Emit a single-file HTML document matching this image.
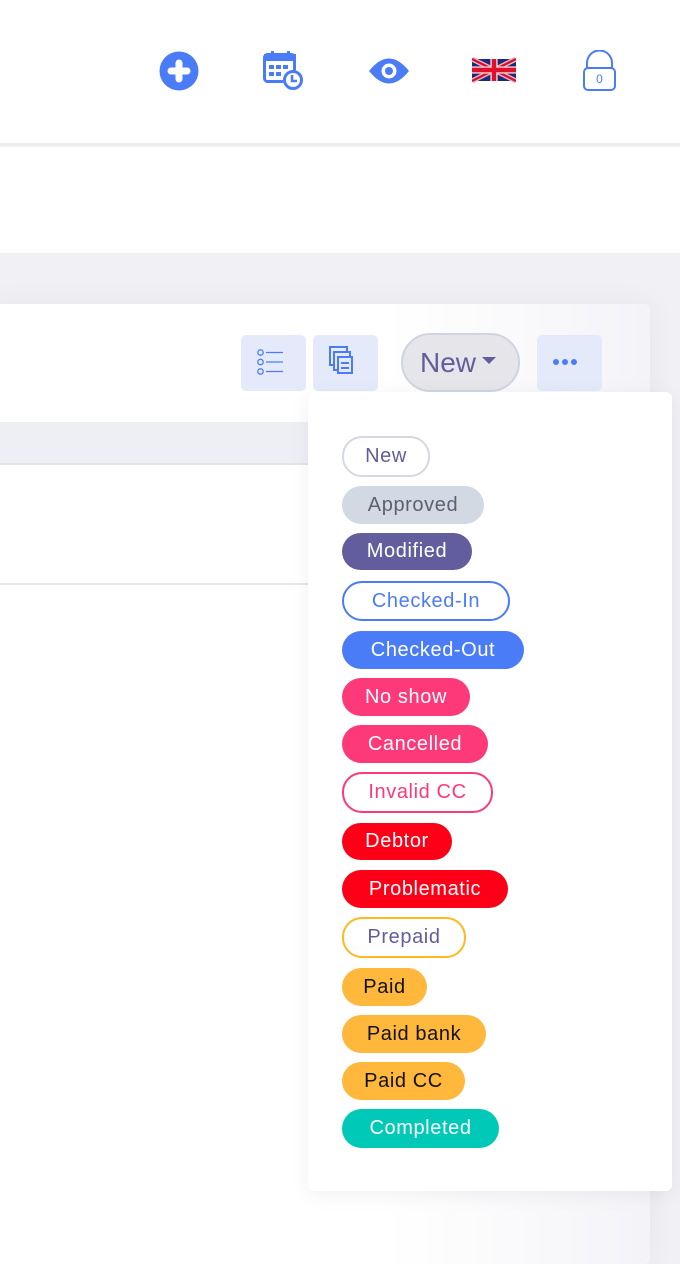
<!DOCTYPE html>
<html><head><meta charset="utf-8"><style>
*{margin:0;padding:0;box-sizing:border-box}
body{width:680px;height:1246px;background:#f0f0f5;position:relative;overflow:hidden;font-family:"Liberation Sans",sans-serif}
.hdr{position:absolute;left:0;top:0;width:680px;height:145px;background:#fff;border-bottom:2px solid #ebebf0}
.sub{position:absolute;left:0;top:147px;width:680px;height:106px;background:#fff}
.card{position:absolute;left:-10px;top:304px;width:660px;height:960px;background:linear-gradient(90deg,#fff 60%,#f4f4f8 100%);border-radius:6px;box-shadow:0 0 30px rgba(0,0,40,.05)}
.strip{position:absolute;left:0;top:422px;width:650px;height:43px;background:#eeeff5;border-bottom:2px solid #e4e4ec}
.line{position:absolute;left:0;top:583px;width:650px;height:2px;background:#e6e6ee}
.btn{position:absolute;top:335px;width:65px;height:56px;background:#e5eafb;border-radius:5px}
.newb{position:absolute;left:401px;top:333px;width:119px;height:59px;border-radius:30px;background:#e6e6ea;border:2px solid #cfd4e2;color:#625d9c;font-size:28px;line-height:55px;padding-left:17px}
.dd{position:absolute;left:308px;top:392px;width:364px;height:799px;background:#fff;border-radius:6px;box-shadow:0 4px 20px rgba(0,0,40,.06)}
.b{position:absolute;left:342px;border-radius:20px;font-size:20px;text-align:center;display:flex;align-items:center;justify-content:center;letter-spacing:.6px}
</style></head><body>
<div class="hdr">
<svg style="position:absolute;left:159px;top:51px" width="40" height="40" viewBox="0 0 40 40"><circle cx="20" cy="20" r="19.5" fill="#4a7cf7"/><path d="M20 12v16M12 20h16" stroke="#fff" stroke-width="7" stroke-linecap="round"/></svg>
<svg style="position:absolute;left:263px;top:50px" width="42" height="42" viewBox="0 0 42 42" fill="#4a7cf7"><rect x="1.5" y="4.5" width="30" height="27" rx="3" fill="none" stroke="#4a7cf7" stroke-width="3"/><rect x="1" y="4" width="32" height="7" /><rect x="8" y="1" width="3" height="7"/><rect x="24" y="1" width="3" height="7"/><rect x="6" y="15" width="5" height="4"/><rect x="13" y="15" width="5" height="4"/><rect x="20" y="15" width="5" height="4"/><rect x="6" y="22" width="5" height="4"/><rect x="13" y="22" width="5" height="4"/><circle cx="30" cy="30" r="10" fill="#fff"/><circle cx="30" cy="30" r="8.5" fill="none" stroke="#4a7cf7" stroke-width="3"/><path d="M29 25v6h5" stroke="#4a7cf7" stroke-width="2.5" fill="none"/></svg>
<svg style="position:absolute;left:369px;top:56px" width="40" height="30" viewBox="0 0 40 30"><path d="M0 15Q20-10 40 15Q20 40 0 15Z" fill="#4a7cf7"/><circle cx="20" cy="15" r="7.5" fill="#fff"/><circle cx="20" cy="15" r="4" fill="#4a7cf7"/></svg>
<svg style="position:absolute;left:472px;top:55px" width="44" height="30" viewBox="0 0 60 30"><rect width="60" height="30" fill="#1a2a80"/><path d="M0 0L60 30M60 0L0 30" stroke="#f0b0b8" stroke-width="7"/><path d="M0 0L60 30M60 0L0 30" stroke="#d01030" stroke-width="3"/><path d="M30 0v30M0 15h60" stroke="#f4d0d4" stroke-width="10"/><path d="M30 0v30M0 15h60" stroke="#e0102a" stroke-width="6"/></svg>
<svg style="position:absolute;left:582px;top:50px" width="36" height="42" viewBox="0 0 36 42"><path d="M5 19V13a12.5 12.5 0 0 1 25 0v6" fill="none" stroke="#4a7cf7" stroke-width="2"/><rect x="2" y="18" width="31" height="22" rx="4" fill="#fff" stroke="#4a7cf7" stroke-width="2"/><text x="17.5" y="33" font-size="12" text-anchor="middle" fill="#4a7cf7" font-family="Liberation Sans">0</text></svg>
</div>
<div class="sub"></div>
<div class="card"></div>
<div class="strip"></div>
<div class="line"></div>
<div class="btn" style="left:241px"><svg width="65" height="56" viewBox="0 0 65 56"><g fill="none" stroke="#4a7cf7" stroke-width="1.3"><circle cx="19.5" cy="17.5" r="2.7"/><circle cx="19.5" cy="27" r="2.7"/><circle cx="19.5" cy="36.5" r="2.7"/><path d="M25 17.5h17M25 27h17M25 36.5h17"/></g></svg></div>
<div class="btn" style="left:313px"><svg width="65" height="56" viewBox="0 0 65 56"><g fill="none" stroke="#4a7cf7" stroke-width="2"><rect x="17" y="12" width="17" height="18" fill="#e5eafb"/><rect x="21" y="17" width="16" height="18" fill="#e5eafb"/><rect x="25" y="22" width="14" height="16" fill="#e5eafb"/><path d="M28 28h8M28 33h8"/></g></svg></div>
<div class="newb">New<span style="display:inline-block;margin-left:6px;vertical-align:middle;border-left:7px solid transparent;border-right:7px solid transparent;border-top:7px solid #625d9c;position:relative;top:-4px"></span></div>
<div class="btn" style="left:537px"><svg width="65" height="56" viewBox="0 0 65 56" fill="#4a7cf7"><circle cx="19" cy="27" r="3"/><circle cx="28" cy="27" r="3"/><circle cx="37" cy="27" r="3"/></svg></div>
<div class="dd"></div>
<div class="b" style="top:436px;width:88px;height:41px;border:2px solid #d3d8e3;color:#625d9c;background:#fff">New</div>
<div class="b" style="top:486px;width:142px;height:38px;background:#d3d9e3;color:#5b6170">Approved</div>
<div class="b" style="top:533px;width:130px;height:37px;background:#625d9c;color:#fff">Modified</div>
<div class="b" style="top:581px;width:168px;height:40px;border:2px solid #4a7cf7;color:#4a7cf7;background:#fff">Checked-In</div>
<div class="b" style="top:631px;width:182px;height:38px;background:#4a7cf7;color:#fff">Checked-Out</div>
<div class="b" style="top:678px;width:128px;height:38px;background:#fd397a;color:#fff">No show</div>
<div class="b" style="top:725px;width:146px;height:38px;background:#fd397a;color:#fff">Cancelled</div>
<div class="b" style="top:772px;width:151px;height:41px;border:2px solid #fd397a;color:#fd397a;background:#fff">Invalid CC</div>
<div class="b" style="top:823px;width:110px;height:37px;background:#fd0018;color:#fff">Debtor</div>
<div class="b" style="top:870px;width:166px;height:38px;background:#fd0018;color:#fff">Problematic</div>
<div class="b" style="top:917px;width:124px;height:41px;border:2px solid #ffb822;color:#625d9c;background:#fff">Prepaid</div>
<div class="b" style="top:968px;width:85px;height:38px;background:#ffb83b;color:#111">Paid</div>
<div class="b" style="top:1015px;width:144px;height:38px;background:#ffb83b;color:#111">Paid bank</div>
<div class="b" style="top:1062px;width:123px;height:38px;background:#ffb83b;color:#111">Paid CC</div>
<div class="b" style="top:1109px;width:157px;height:39px;background:#00c9b7;color:#fff">Completed</div>
</body></html>
